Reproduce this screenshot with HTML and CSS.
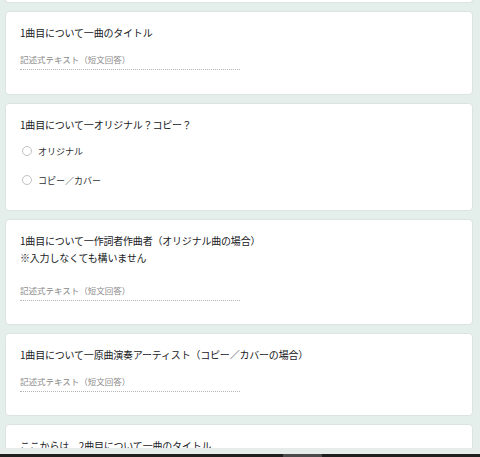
FILE: index.html
```html
<!DOCTYPE html>
<html lang="ja">
  <head>
    <meta charset="UTF-8" />
    <meta name="viewport" content="width=device-width, initial-scale=1.0" />
    <title>曲のエントリー</title>
    <link rel="stylesheet" href="styles.css">
  </head>
  <body>
    <div class="page">
      <div class="card card-tail"></div>

      <div class="card card-first">
        <div class="question">1曲目について一曲のタイトル</div>
        <div class="answer">記述式テキスト（短文回答）</div>
      </div>

      <div class="card card-choice">
        <div class="question">1曲目について一オリジナル？コピー？</div>
        <div class="options">
          <label class="option"><span class="radio"></span>オリジナル</label>
          <label class="option"><span class="radio"></span>コピー／カバー</label>
        </div>
      </div>

      <div class="card">
        <div class="question">1曲目について一作詞者作曲者（オリジナル曲の場合）</div>
        <div class="note">※入力しなくても構いません</div>
        <div class="answer answer-wide">記述式テキスト（短文回答）</div>
      </div>

      <div class="card">
        <div class="question">1曲目について一原曲演奏アーティスト（コピー／カバーの場合）</div>
        <div class="answer">記述式テキスト（短文回答）</div>
      </div>

      <div class="card">
        <div class="question">ここからは、2曲目について一曲のタイトル</div>
        <div class="answer">記述式テキスト（短文回答）</div>
      </div>
    </div>

    <div class="band"></div>
    <div class="taskbar"><span class="thumb"></span></div>
  </body>
</html>
```

FILE: styles.css
```css
* {
  box-sizing: border-box;
  margin: 0;
  padding: 0;
}

body {
  font-family: "Noto Sans CJK JP", "Noto Sans", sans-serif;
  background: #e4efeb;
  color: #202124;
  width: 480px;
  height: 457px;
  overflow: hidden;
}

.page {
  height: 448px;
  overflow: hidden;
  display: flex;
  flex-direction: column;
  gap: 8px;
  padding: 0 7px 0 5px;
}

.card {
  flex-shrink: 0;
  background: white;
  border: 1px solid #dde3e0;
  border-radius: 4px;
  padding: 14px 14px 23px;
}

.card-tail {
  height: 3px;
  padding: 0;
  border-top: none;
  border-radius: 0 0 4px 4px;
}

.card-first {
  padding-bottom: 24px;
}

.card-choice {
  padding-bottom: 20px;
}

.question,
.note {
  height: 14px;
  font-size: 10px;
  line-height: 14px;
  letter-spacing: -0.2px;
  white-space: nowrap;
}

.note {
  margin-top: 3px;
}

.answer {
  width: 220px;
  height: 17px;
  margin-top: 13px;
  padding-bottom: 4px;
  border-bottom: 1px dotted #b5b5b5;
  font-size: 8.5px;
  line-height: 12px;
  color: #8a8a8a;
}

.answer-wide {
  margin-top: 19px;
}

.options {
  display: flex;
  flex-direction: column;
  gap: 9px;
  margin-top: 9px;
}

.option {
  display: flex;
  align-items: center;
  height: 20px;
  font-size: 9px;
  color: #303134;
}

.radio {
  width: 10px;
  height: 10px;
  border: 1px solid #bfc2c4;
  border-radius: 50%;
  margin: 0 6px 0 2px;
}

.band {
  height: 6px;
  background: #e6ecea;
}

.taskbar {
  height: 3px;
  background: #1f1f1f;
  position: relative;
}

.taskbar .thumb {
  position: absolute;
  left: 283px;
  top: 0;
  width: 39px;
  height: 3px;
  background: #4a4a4a;
}
```
